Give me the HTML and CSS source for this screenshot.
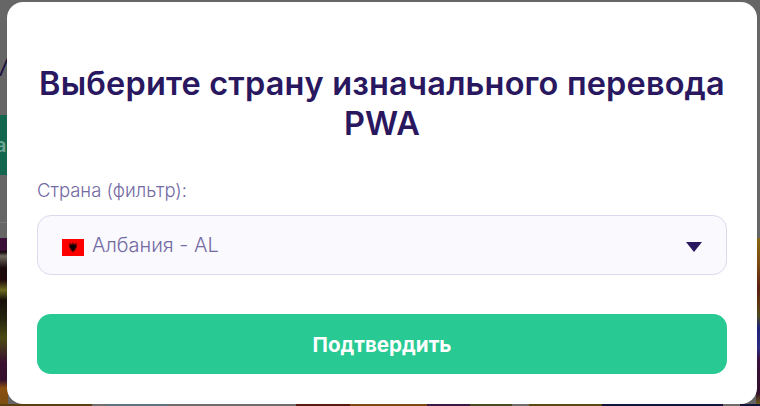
FILE: index.html
```html
<!DOCTYPE html>
<html lang="ru">
<head>
<meta charset="utf-8">
<title>PWA</title>
<link rel="stylesheet" href="styles.css">
</head>
<body>
<div class="backdrop">
  <div class="side side-left">
    <div class="side-text">/</div>
    <div class="side-green">а</div>
    <div class="side-line"></div>
    <div class="side-game"></div>
  </div>
  <div class="side side-right">
    <div class="side-game side-game-right"></div>
  </div>
  <div class="bottom-strip"></div>
</div>
<main class="modal">
  <h1 class="title">Выберите страну изначального перевода PWA</h1>
  <label class="label">Страна (фильтр):</label>
  <div class="select">
    <svg class="flag" viewBox="0 0 22 17" aria-hidden="true">
      <rect width="22" height="17" fill="#ff0000"/>
      <path d="M6.800 4l2.700.6 1.500-1.600 1.500 1.600 2.700-.6-.1 4.500-1.400 1.700-.4 1.500-1.300.6-1 1.700-1-1.700-1.300-.6-.4-1.500-1.400-1.700z" fill="#400808" fill-opacity=".6"/>
      <path d="M7.900 5.400l2.100.5 1-1 1 1 2.100-.5-.1 2.800-1.300 1.600-.2 1.300-1 .5-.5 1.200-.5-1.200-1-.5-.2-1.300-1.300-1.600z" fill="#0c0202"/>
    </svg>
    <span class="select-text">Албания - AL</span>
    <span class="caret"></span>
  </div>
  <button class="confirm">Подтвердить</button>
</main>
</body>
</html>
```
FILE: styles.css
```css
* { box-sizing: border-box; }
html, body { margin: 0; padding: 0; width: 760px; height: 406px; overflow: hidden; }
body { background: #666; font-family: Inter, "Noto Sans", sans-serif; position: relative; padding: 2px 3px 2px 7px; }
.backdrop { position: absolute; inset: 0; }
.side { position: absolute; top: 0; bottom: 0; width: 8px; }
.side-left { left: 0; }
.side-right { right: 0; width: 4px; }
.side-text { position: absolute; top: 50px; left: 0; color: #1a1140; font-size: 24px; font-style: italic; }
.side-green { position: absolute; top: 115px; left: 0; width: 8px; height: 60px; background: #12664d; color: #6fa594; overflow: hidden; font-size: 20px; font-weight: 600; line-height: 60px; text-indent: -5px; }
.side-line { position: absolute; top: 222px; left: 0; width: 8px; height: 1px; background: #777; }
.side-game { position: absolute; top: 238px; bottom: 0; left: 0; width: 8px; background: linear-gradient(180deg, #3a0f38 0, #3a0f38 12px, #15090c 14px, #6f6a60 18px, #1b0a0c 30px, #20090a 42px, #6a6a20 52px, #16100a 62px, #23230f 80px, #4a4a14 100px, #3a1030 125px, #35102c 142px, #8a5010 150px, #7a5012 168px); }
.side-game-right { background: linear-gradient(180deg, #85670f 0, #7a4a12 25px, #5a2010 50px, #5a3a10 68px, #4a4a20 78px, #20207a 90px, #2c2c80 110px, #38103a 122px, #32102c 155px, #7a6a18 168px); width: 4px; }
.bottom-strip { position: absolute; left: 0; right: 0; bottom: 0; height: 2px; background: linear-gradient(90deg, #5a4010 0 92px, #707070 92px 107px, #5f7380 107px 167px, #6e6e6e 167px 296px, #5a1a10 296px 350px, #7a4a12 350px 427px, #3a1a40 427px 470px, #4a4a20 470px 512px, #6e6e6e 512px 529px, #5a4a12 529px 602px, #14143a 602px 723px, #6e6e6e 723px 740px, #14143a 740px); }
.modal { position: relative; width: 750px; height: 402px; background: #fff; border-radius: 16px; padding: 62px 30px 30px; display: flex; flex-direction: column; }
.title { margin: 0 0 35px; font-size: 32.500px; line-height: 40px; font-weight: 600; letter-spacing: .16px; color: #29175f; text-align: center; }
.label { font-size: 18.500px; line-height: 22px; font-weight: 300; color: #736aa3; margin-bottom: 14px; }
.select { height: 60px; border: 1px solid #dcd9ec; border-radius: 14px; background: #faf9fd; display: flex; align-items: center; padding: 0 24px 0 24px; }
.flag { width: 22px; height: 17px; margin: 4px 8px 0 0; flex: none; }
.select-text { font-size: 20px; font-weight: 300; color: #736aa3; flex: 1; }
.caret { width: 0; height: 0; margin-top: 3px; border-left: 8px solid transparent; border-right: 8px solid transparent; border-top: 10px solid #29175f; }
.confirm { margin-top: 39px; height: 60px; border: 0; border-radius: 14px; background: #28c993; color: #fff; font: 700 20.600px Inter, "Noto Sans", sans-serif; }
```
